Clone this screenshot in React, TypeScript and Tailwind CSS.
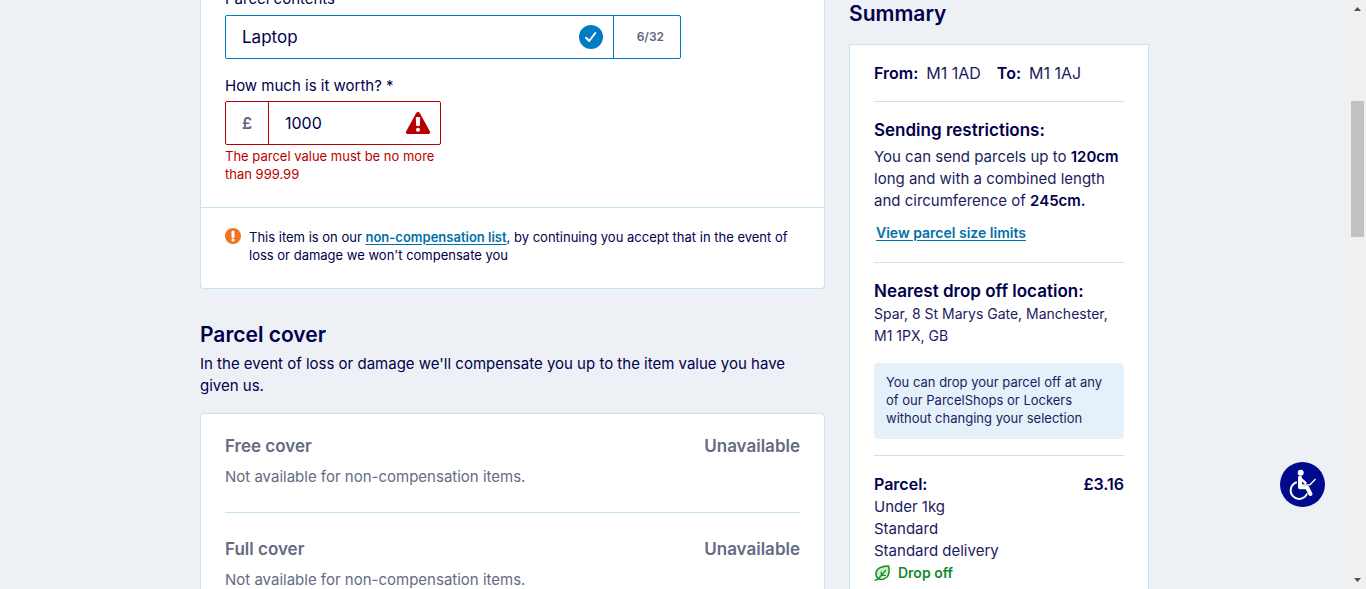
import type { ReactNode } from "react";

function CheckIcon() {
  return (
    <svg viewBox="0 0 24 24" className="size-6 shrink-0" aria-hidden="true">
      <circle cx="12" cy="12" r="12" fill="#007bc4" />
      <path d="M7 12.7l3.2 3.3L16.3 8" fill="none" stroke="#fff" strokeWidth="2" strokeLinecap="round" strokeLinejoin="round" />
    </svg>
  );
}

function WarningIcon() {
  return (
    <svg viewBox="0 0 24 22" className="h-[22px] w-6 shrink-0" aria-hidden="true">
      <path d="M12 0c.8 0 1.4.4 1.8 1.1l10 18.2c.7 1.3-.1 2.7-1.6 2.7H1.8C.3 22-.5 20.6.2 19.3l10-18.2C10.6.4 11.2 0 12 0z" fill="#b80000" />
      <path d="M10.300 5.500h3.400l-.3 8h-2.800z" fill="#fff" stroke="#fff" strokeWidth="1" strokeLinejoin="round" />
      <circle cx="12" cy="17.700" r="2" fill="#fff" />
    </svg>
  );
}

function NoticeIcon() {
  return (
    <svg viewBox="0 0 16 16" className="size-4 shrink-0" aria-hidden="true">
      <circle cx="8" cy="8" r="8" fill="#ee7420" />
      <rect x="6.500" y="2.800" width="3" height="7.200" rx="1.200" fill="#fff" />
      <circle cx="8" cy="12" r="1.600" fill="#fff" />
    </svg>
  );
}

function LeafIcon() {
  return (
    <svg viewBox="0 0 16 16" className="size-4 shrink-0" aria-hidden="true" fill="none" stroke="#128a2e" strokeLinecap="round" strokeLinejoin="round">
      <path d="M14.500 1C9 1.300 3.500 2.300 2.300 6.500c-.8 3 .2 5.800 2 7.300 3 1.200 7.700.6 9.600-2.800C15.600 8 15.200 4 14.500 1z" fill="#d5ecc2" strokeWidth="1.500" />
      <path d="M.8 15.200c1.500.1 2.600-.3 3.500-1.300L11.500 5.500M7.300 10.300V6.800M7.300 10.300h3.900" strokeWidth="1.200" />
    </svg>
  );
}

function AccessibilityIcon() {
  return (
    <svg viewBox="0 0 45 45" className="size-full" aria-hidden="true" fill="none" stroke="#fff">
      <circle cx="20.700" cy="10.800" r="3" fill="#fff" stroke="none" />
      <path d="M16.800 20.200a8.500 8.500 0 1 0 10.300 11.300" strokeWidth="2" />
      <path d="M20 15.800v9.500h7l3.500 6.700" strokeWidth="4" strokeLinejoin="round" strokeLinecap="round" />
      <path d="M21 17l4.500 4" strokeWidth="2.400" strokeLinecap="round" />
      <path d="M22 22.800h8l5.500-5.800" strokeWidth="1.300" />
    </svg>
  );
}

function Cover({ title, children }: { title: string; children: ReactNode }) {
  return (
    <section className="border-[#c5e3f1] py-6 first:pt-5 not-last:border-b">
      <div className="flex justify-between text-[17px] font-semibold leading-6">
        <h3>{title}</h3>
        <span>Unavailable</span>
      </div>
      <p className="mt-2">{children}</p>
    </section>
  );
}

function ScrollTrack() {
  return (
    <div className="flex w-[17px] shrink-0 flex-col items-center bg-[#f0f0f0] py-[7px]" aria-hidden="true">
      <svg viewBox="0 0 7 4" className="h-1 w-[7px]"><path d="M0 4L3.500 0 7 4z" fill="#505050" /></svg>
      <div className="mt-[90px] h-[136px] w-[13px] bg-[#c1c1c1]" />
      <svg viewBox="0 0 7 4" className="mt-auto h-1 w-[7px]"><path d="M0 0l3.500 4L7 0z" fill="#505050" /></svg>
    </div>
  );
}

export default function App() {
  return (
    <div className="flex h-screen overflow-hidden bg-[#edf1f5] font-['Inter',sans-serif] text-[15px] leading-[22px] text-[#00004b]">
      <div className="min-w-0 flex-1 overflow-hidden">
        <div className="mx-auto -mt-3 flex max-w-[949px] items-start gap-6">
          <main className="min-w-0 flex-1">
            <div className="rounded-b border border-t-0 border-[#c5e3f1] bg-white">
              <form className="px-6 pb-6">
                <label htmlFor="contents" className="block">Parcel contents</label>
                <div className="mt-[5px] flex h-11 w-full max-w-[456px] overflow-hidden rounded-xs border border-[#007bc4]">
                  <div className="flex min-w-0 flex-1 items-center pl-4 pr-2.5">
                    <input id="contents" defaultValue="Laptop" className="min-w-0 flex-1 text-[17px] outline-none" />
                    <CheckIcon />
                  </div>
                  <span className="flex w-[67px] items-center justify-end border-l border-[#007bc4] pr-4 text-xs font-semibold text-[#5f6580]">6/32</span>
                </div>
                <label htmlFor="worth" className="mt-4 block">How much is it worth? *</label>
                <div className="mt-1 flex h-11 w-full max-w-[216px] overflow-hidden rounded-xs border border-[#b80000]">
                  <span className="flex w-[43px] items-center justify-center border-r border-[#b80000] text-base font-semibold text-[#5f6580]">£</span>
                  <div className="flex min-w-0 flex-1 items-center pl-4 pr-2.5">
                    <input id="worth" defaultValue="1000" aria-invalid="true" aria-describedby="worth-error" className="min-w-0 flex-1 text-base outline-none" />
                    <WarningIcon />
                  </div>
                </div>
                <p id="worth-error" className="mt-0.5 max-w-[216px] text-[13px] leading-[18px] text-[#b80000]">The parcel value must be no more than 999.99</p>
              </form>
              <div className="flex gap-2 border-t border-[#c5e3f1] px-6 pb-6 pt-5 text-[13px] leading-[18px]">
                <NoticeIcon />
                <p>
                  This item is on our <a href="#list" className="font-semibold text-[#0070a8] underline underline-offset-2">non-compensation list</a>, by continuing you accept that in the event of loss or damage we won't compensate you
                </p>
              </div>
            </div>

            <h2 className="mt-8 text-[21px] font-semibold leading-7">Parcel cover</h2>
            <p className="mt-1 pr-6">In the event of loss or damage we'll compensate you up to the item value you have given us.</p>
            <div className="mt-4 rounded border border-[#c5e3f1] bg-white px-6 text-[#656b82]">
              <Cover title="Free cover">Not available for non-compensation items.</Cover>
              <Cover title="Full cover">Not available for non-compensation items.</Cover>
            </div>
          </main>

          <aside className="w-[300px] shrink-0 pt-3">
            <h2 className="text-[21px] font-semibold leading-7">Summary</h2>
            <div className="mt-4 divide-y divide-[#c5e3f1] border border-[#c5e3f1] bg-white px-6 text-[#1b1b5e]">
              <dl className="flex gap-4 py-4 text-base leading-6">
                <div className="flex gap-2"><dt className="font-semibold text-[#00004b]">From:</dt><dd>M1 1AD</dd></div>
                <div className="flex gap-2"><dt className="font-semibold text-[#00004b]">To:</dt><dd>M1 1AJ</dd></div>
              </dl>
              <section className="pb-[18px] pt-4">
                <h3 className="text-[17px] font-semibold leading-6 text-[#00004b]">Sending restrictions:</h3>
                <p className="mt-1">You can send parcels up to <strong className="font-semibold text-[#00004b]">120cm</strong> long and with a combined length and circumference of <strong className="font-semibold text-[#00004b]">245cm.</strong></p>
                <a href="#limits" className="mt-2.5 block px-0.5 text-sm font-semibold leading-[22px] text-[#0070a8] underline underline-offset-2">View parcel size limits</a>
              </section>
              <section className="py-4">
                <h3 className="text-[17px] font-semibold leading-6 text-[#00004b]">Nearest drop off location:</h3>
                <p className="text-sm leading-[22px]">Spar, 8 St Marys Gate, Manchester, M1 1PX, GB</p>
                <p className="mt-4 rounded bg-[#e4f1fa] px-3 pb-3 pt-2.5 text-[13px] leading-[18px]">You can drop your parcel off at any of our ParcelShops or Lockers without changing your selection</p>
              </section>
              <section className="py-4">
                <div className="flex justify-between text-base font-semibold leading-6 text-[#00004b]">
                  <h3>Parcel:</h3>
                  <span>£3.16</span>
                </div>
                <p>Under 1kg</p>
                <p>Standard</p>
                <p>Standard delivery</p>
                <p className="flex items-center gap-2 text-sm font-semibold leading-[22px] text-[#128a2e]"><LeafIcon />Drop off</p>
              </section>
            </div>
          </aside>
        </div>
      </div>
      <ScrollTrack />
      <button type="button" aria-label="Accessibility options" className="fixed bottom-[82px] right-[41px] size-[45px] rounded-full bg-[#000a8c]">
        <AccessibilityIcon />
      </button>
    </div>
  );
}
